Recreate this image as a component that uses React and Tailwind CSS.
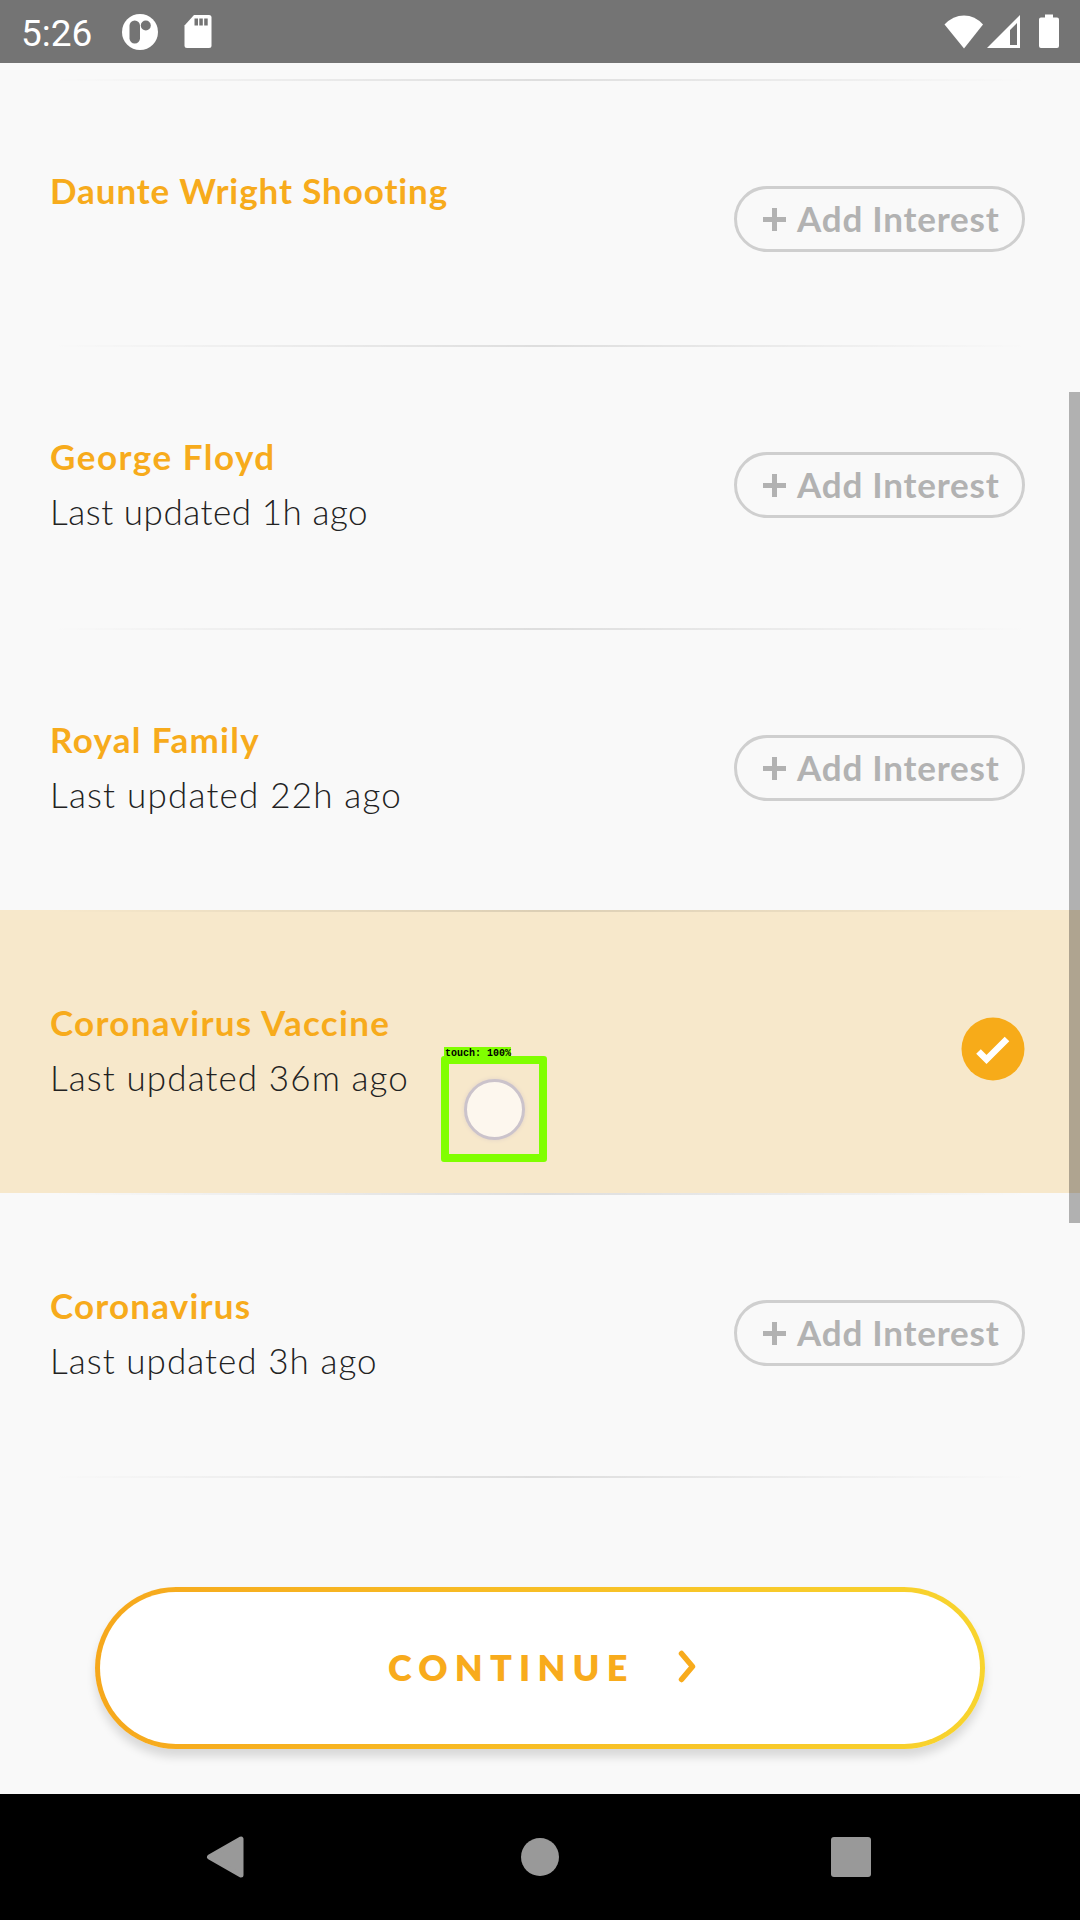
import React from 'react';

const rows = [
  { title: 'Daunte Wright Shooting', titleTracking: 'tracking-[0.9px]', height: 'h-[266px]', offset: 'pt-[81px]' },
  { title: 'George Floyd', titleTracking: 'tracking-[1.5px]', sub: 'Last updated 1h ago', subTracking: 'tracking-[0.55px]', height: 'h-[283px]', offset: 'pt-[81px]' },
  { title: 'Royal Family', titleTracking: 'tracking-[1.3px]', sub: 'Last updated 22h ago', subTracking: 'tracking-[1.2px]', height: 'h-[282px]', offset: 'pt-[81px]' },
  { title: 'Coronavirus Vaccine', titleTracking: 'tracking-[1.3px]', sub: 'Last updated 36m ago', subTracking: 'tracking-[1.1px]', height: 'h-[283px]', offset: 'pt-[82px]', selected: true },
  { title: 'Coronavirus', titleTracking: 'tracking-[1.2px]', sub: 'Last updated 3h ago', subTracking: 'tracking-[1.05px]', height: 'h-[283px]', offset: 'pt-[82px]' },
];

function StatusBar() {
  return (
    <header className="flex h-[63px] shrink-0 items-center bg-[#747474] pl-[21px] pr-[21px] text-white">
      <span className="w-[99px] font-[Roboto,sans-serif] text-[37px] leading-[63px] tracking-[0px] pt-[3px]">5:26</span>
      <svg className="ml-[2px] h-[36px] w-[36px]" viewBox="0 0 36 36">
        <circle cx="18" cy="18" r="18" fill="white" />
        <rect x="7.5" y="6.5" width="10.5" height="23" rx="5.2" fill="#747474" />
        <circle cx="23.8" cy="11.5" r="5" fill="#747474" />
      </svg>
      <svg className="ml-[26px] h-[33px] w-[28px]" viewBox="0 0 28 33">
        <path d="M10 0H25a2.5 2.5 0 0 1 2.500 2.500V30.500a2.500 2.500 0 0 1-2.500 2.500H3a2.500 2.500 0 0 1-2.500-2.500V10.500Z" fill="white" />
        <path d="M10.500 3.500h3.500v7h-3.500zM15.300 3.500h3.500v7h-3.500zM20.200 3.500h3.500v7h-3.500z" fill="#747474" />
      </svg>
      <div className="grow" />
      <svg className="h-[34px] w-[40px]" viewBox="0 0 40 34">
        <path d="M0.500 9.500Q9 0.500 20 0.500T39 9.500L20 33.500Z" fill="white" />
      </svg>
      <svg className="ml-[3px] h-[33px] w-[33px]" viewBox="0 0 33 33">
        <path fillRule="evenodd" d="M33 0V33H0ZM30 8L23 15V30H30Z" fill="white" />
      </svg>
      <svg className="ml-[19px] h-[35px] w-[20px]" viewBox="0 0 20 35">
        <path d="M6 0.500H14V3.500H18a2 2 0 0 1 2 2V32a2 2 0 0 1-2 2H2a2 2 0 0 1-2-2V5.500a2 2 0 0 1 2-2H6Z" fill="white" />
      </svg>
    </header>
  );
}

function Divider() {
  return <div className="mx-[50px] mb-[1px] h-[2px] shrink-0 bg-linear-to-r from-transparent via-black/11 to-transparent" />;
}

function AddButton() {
  return (
    <button className="mt-[104px] flex h-[66px] w-[291px] shrink-0 items-center rounded-full border-[3px] border-[#cfcfcf] pl-[26px] text-[#b2b2b2]">
      <svg className="h-[23px] w-[23px]" viewBox="0 0 23 23">
        <path d="M11.500 0V23M0 11.500H23" stroke="currentColor" strokeWidth="5" />
      </svg>
      <span className="ml-[11px] whitespace-nowrap pb-[2px] text-[35px] font-bold leading-[42px] tracking-[0.8px]">Add Interest</span>
    </button>
  );
}

function Check() {
  return (
    <svg className="mt-[104px] h-[64px] w-[64px] shrink-0" viewBox="0 0 64 64">
      <circle cx="32" cy="32" r="31.500" fill="#f7ab19" />
      <path d="M17.500 34.500L25.500 42.500L46 22" fill="none" stroke="white" strokeWidth="6.500" />
    </svg>
  );
}

function Row({ row }) {
  return (
    <section className={`${row.height} ${row.selected ? 'bg-[#f7e8cb]' : ''} flex shrink-0 flex-col`}>
      <Divider />
      <div className="flex items-start justify-between pl-[50px] pr-[55px]">
        <div className={`${row.offset} whitespace-nowrap text-[35px] leading-[55px]`}>
          <h2 className={`font-bold text-[#f7ab1c] ${row.titleTracking}`}>{row.title}</h2>
          {row.sub && <p className={`font-light text-[#222] ${row.subTracking}`}>{row.sub}</p>}
        </div>
        {row.selected ? <Check /> : <AddButton />}
      </div>
    </section>
  );
}

function TouchMarker() {
  return (
    <div className="absolute left-[441px] top-[1047px]">
      <div className="ml-[3px] h-[10px] w-[67px] whitespace-pre bg-[#80ff00] pl-[1px] font-['Liberation_Mono',monospace] text-[10px] font-bold leading-[14px] text-black">touch: 100%</div>
      <div className="-mt-[1px] flex h-[106px] w-[106px] items-center justify-center rounded-[3px] border-8 border-[#80ff00]">
        <div className="h-[61px] w-[61px] rounded-full border-[3px] border-[#cbc3cb] bg-[#fdf7ee] shadow-[0_0_4px_#e0d2c8]" />
      </div>
    </div>
  );
}

function NavBar() {
  return (
    <nav className="flex h-[126px] shrink-0 items-center bg-black pl-[206px] pr-[209px] text-[#999]">
      <svg className="h-[42px] w-[38px]" viewBox="0 0 38 42">
        <path d="M35 3V39L3.500 21Z" fill="currentColor" stroke="currentColor" strokeWidth="5" strokeLinejoin="round" />
      </svg>
      <div className="ml-[277px] h-[38px] w-[38px] rounded-full bg-current" />
      <div className="ml-auto h-[40px] w-[40px] rounded-[3px] bg-current" />
    </nav>
  );
}

export default function App() {
  return (
    <div className="relative flex h-[1920px] w-[1080px] flex-col overflow-hidden bg-[#f9f9f9] font-[Lato,sans-serif]">
      <StatusBar />
      <main className="flex grow flex-col pt-[16px]">
        {rows.map((row) => <Row key={row.title} row={row} />)}
        <Divider />
        <button className="mx-auto mt-[108px] h-[162px] w-[890px] rounded-full bg-linear-to-r from-[#f6a81c] to-[#f8d42e] p-[5px] shadow-[0_8px_10px_rgba(0,0,0,0.13)]">
          <span className="flex h-full items-center rounded-full bg-white pb-[3px] pl-[288px] text-[#f8ab1c]">
            <span className="w-[290px] text-left text-[36px] font-extrabold leading-[44px] tracking-[7.2px]">CONTINUE</span>
            <svg className="h-[33px] w-[18px]" viewBox="0 0 18 33">
              <path d="M3.500 3.500L14.500 16.500L3.500 29.500" fill="none" stroke="currentColor" strokeWidth="5.500" strokeLinecap="round" strokeLinejoin="round" />
            </svg>
          </span>
        </button>
      </main>
      <NavBar />
      <div className="absolute left-[1069px] top-[392px] h-[831px] w-[11px] bg-black/29" />
      <TouchMarker />
    </div>
  );
}
